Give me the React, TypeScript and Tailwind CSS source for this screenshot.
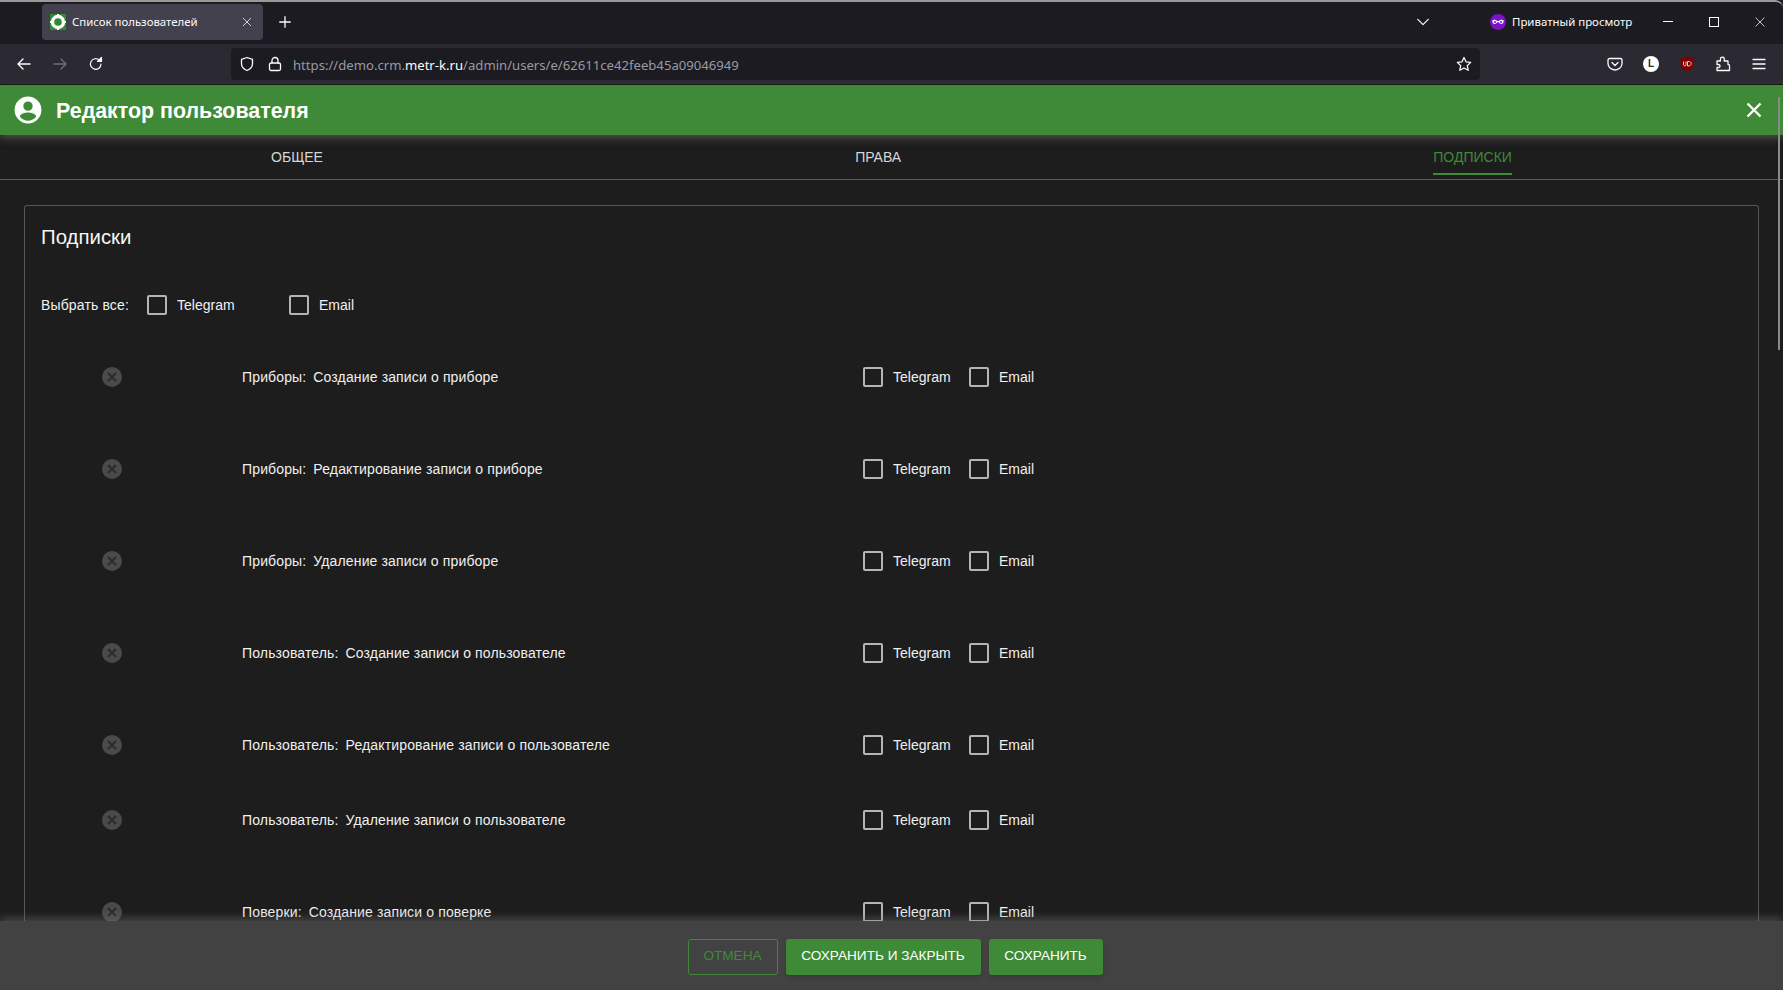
import React from "react";

const rows: [string, string, string][] = [
  ["Приборы:", "Создание записи о приборе", "h-[92px]"],
  ["Приборы:", "Редактирование записи о приборе", "h-[92px]"],
  ["Приборы:", "Удаление записи о приборе", "h-[92px]"],
  ["Пользователь:", "Создание записи о пользователе", "h-[92px]"],
  ["Пользователь:", "Редактирование записи о пользователе", "h-[75px]"],
  ["Пользователь:", "Удаление записи о пользователе", "h-[92px]"],
  ["Поверки:", "Создание записи о поверке", "h-[92px]"],
];

const Box = () => <span className="block w-5 h-5 shrink-0 rounded-[2px] border-2 border-[#b5b5b5]" />;

const Stroke = ({ size = 16, children, color = "#fbfbfe", sw = 1.4 }: { size?: number; children: React.ReactNode; color?: string; sw?: number }) => (
  <svg width={size} height={size} viewBox="0 0 16 16" fill="none" stroke={color} strokeWidth={sw} strokeLinecap="round" strokeLinejoin="round" className="shrink-0">
    {children}
  </svg>
);

const Slot = ({ w, children }: { w: string; children: React.ReactNode }) => (
  <div className={`${w} flex items-center justify-center shrink-0`}>{children}</div>
);

function TabStrip() {
  return (
    <div className="h-[44px] bg-[#1c1b22] border-t-2 border-[#9a9a9a] rounded-tr-[8px] flex items-center pl-[42px] font-['Noto_Sans',sans-serif] text-[#fbfbfe]">
      <div className="w-[221px] h-[36px] bg-[#42414d] rounded-[4px] flex items-center pl-2 pr-2 mt-[-2px]">
        <svg width="16" height="16" viewBox="0 0 16 16" className="shrink-0">
          <rect width="16" height="16" fill="#2f8a34" />
          <circle cx="8" cy="8" r="5.500" fill="none" stroke="#fff" strokeWidth="3.400" />
          <path d="M8 0v1.500M8 14.500V16M0 8h1.500M14.500 8H16" stroke="#fff" strokeWidth="2" />
        </svg>
        <span className="ml-[6px] text-[11.4px] leading-none whitespace-nowrap">Список пользователей</span>
        <span className="ml-auto mr-[2px]">
          <Stroke size={12} sw={1.3} color="#d4d4d8"><path d="M3 3l10 10M13 3L3 13" /></Stroke>
        </span>
      </div>
      <div className="ml-[15px] mt-[-2px]">
        <Stroke size={14} sw={1.5}><path d="M8 2v12M2 8h12" /></Stroke>
      </div>
      <div className="ml-auto flex items-center mt-[-3px]">
        <Stroke size={14} sw={1.4}><path d="M2 5l6 6 6-6" /></Stroke>
        <svg width="16" height="16" viewBox="0 0 16 16" className="ml-[60px] shrink-0">
          <circle cx="8" cy="8" r="8" fill="#7a12c9" />
          <path d="M2.500 6.300c1.300-1 3.500-.8 4.600.7h1.800c1.100-1.500 3.300-1.700 4.600-.7.500 1.700-.3 3.700-2 3.700-1.300 0-2-.7-2.700-1.700H7.200C6.500 9.300 5.800 10 4.500 10c-1.700 0-2.500-2-2-3.700z" fill="#fff" />
          <circle cx="5" cy="8" r="1.100" fill="#7a12c9" />
          <circle cx="11" cy="8" r="1.100" fill="#7a12c9" />
        </svg>
        <span className="ml-[6px] w-[121px] text-[11.45px] leading-none whitespace-nowrap">Приватный просмотр</span>
        <div className="flex items-center ml-[12px]">
          <Slot w="w-[46px]"><svg width="10" height="1" className="shrink-0"><rect width="10" height="1" fill="#fbfbfe" /></svg></Slot>
          <Slot w="w-[46px]"><span className="block w-[10px] h-[10px] border border-[#fbfbfe]" /></Slot>
          <Slot w="w-[46px]"><Stroke size={12} sw={1}><path d="M2.500 2.500l11 11M13.500 2.500l-11 11" /></Stroke></Slot>
        </div>
      </div>
    </div>
  );
}

function Toolbar() {
  return (
    <div className="h-[41px] bg-[#2b2a33] border-b border-[#0c0c0d] flex items-center font-['Noto_Sans',sans-serif]">
      <div className="flex items-center pl-[6px] w-[231px] shrink-0">
        <Slot w="w-9"><Stroke><path d="M14 8H2M7 3L2 8l5 5" /></Stroke></Slot>
        <Slot w="w-9"><Stroke color="#6f6e75"><path d="M2 8h12M9 3l5 5-5 5" /></Stroke></Slot>
        <Slot w="w-9">
          <Stroke sw={1.2}><path d="M13 8a5.300 5.300 0 1 1-1.700-3.900" /><path d="M13.500 1.500v4h-4z" fill="#fbfbfe" /></Stroke>
        </Slot>
      </div>
      <div className="w-[1249px] h-[32px] bg-[#1c1b22] rounded-[4px] flex items-center pl-[8px] pr-[8px] shrink-0">
        <Slot w="w-4">
          <Stroke size={16} sw={1.3}><path d="M8 1.500l5.500 1.800v4.200c0 3.500-2.700 5.900-5.500 7-2.800-1.100-5.500-3.500-5.500-7V3.300z" /></Stroke>
        </Slot>
        <span className="ml-3">
          <Stroke size={16} sw={1.3}><rect x="2.500" y="7" width="11" height="7.500" rx="1.500" /><path d="M5 7V4.500a3 3 0 0 1 6 0V7" /></Stroke>
        </span>
        <span className="ml-[10px] pt-[3px] text-[13.13px] leading-none text-[#9a9aa0] whitespace-nowrap">
          https://demo.crm.<span className="text-[#fbfbfe]">metr-k.ru</span>/admin/users/e/62611ce42feeb45a09046949
        </span>
        <span className="ml-auto">
          <Stroke size={16} sw={1.3}><path d="M8 1.500l2 4.300 4.700.6-3.400 3.200.9 4.700L8 12l-4.200 2.300.9-4.700L1.300 6.400 6 5.800z" /></Stroke>
        </span>
      </div>
      <div className="flex items-center pl-[117px]">
        <Slot w="w-9">
          <Stroke size={16} sw={1.3}><path d="M2.500 2.500h11a1.500 1.500 0 0 1 1.500 1.500v3.500a7 6.500 0 0 1-14 0V4a1.500 1.500 0 0 1 1.500-1.500z" /><path d="M5 6.500l3 3 3-3" /></Stroke>
        </Slot>
        <Slot w="w-9">
          <span className="w-4 h-4 rounded-full bg-white text-[#2b2a33] text-[10px] font-bold leading-none flex items-center justify-center font-['Liberation_Sans',sans-serif]">L</span>
        </Slot>
        <Slot w="w-9">
          <svg width="16" height="16" viewBox="0 0 16 16" className="shrink-0">
            <path d="M8 .5l6.500 2v5.500c0 3.500-3 6-6.500 7.500C4.500 14 1.500 11.500 1.500 8V2.500z" fill="#800000" />
            <path d="M4.500 5.500v3.200c0 1.500 2.500 1.500 2.500 0V5.500M8.500 5.500v4.500c2.800.2 3.800-1 3.800-2.300 0-1.300-1-2.400-3.800-2.200z" fill="none" stroke="#e8c8c8" strokeWidth="1" />
          </svg>
        </Slot>
        <Slot w="w-9">
          <Stroke size={16} sw={1.3}><path d="M2 5h3.500c-.5-3 .5-3.800 2-3.800s2.200 1 1.600 3.800H13v3.500c1-.3 1.500.3 1.500 1.800v4.200H2v-3h1.500c1 0 1.500-.6 1.500-1.500S4.500 8.500 3.500 8.500H2z" /></Stroke>
        </Slot>
        <Slot w="w-9">
          <Stroke size={16} sw={1.3}><path d="M2 3.500h12M2 8h12M2 12.500h12" /></Stroke>
        </Slot>
      </div>
    </div>
  );
}

export default function App() {
  return (
    <div className="relative w-[1783px] h-[990px] overflow-hidden flex flex-col bg-[#1d1d1d] font-['Liberation_Sans',Arial,sans-serif] text-[14px] text-[#f0f0f0]">
      <TabStrip />
      <Toolbar />

      <header className="relative z-10 h-[50px] shrink-0 bg-[#3e8a36] flex items-center pl-[14px] pr-[21px] shadow-[0_3px_8px_rgba(120,120,120,0.55)]">
        <svg width="28" height="28" viewBox="0 0 24 24" fill="#fff" className="shrink-0">
          <path d="M12 .500a11.500 11.500 0 1 0 0 23 11.500 11.500 0 0 0 0-23zm0 4.200a4 4 0 1 1 0 8 4 4 0 0 1 0-8zm0 16.500c-2.900 0-5.500-1.400-7-3.600.1-2.300 4.700-3.500 7-3.500s6.900 1.200 7 3.500c-1.500 2.200-4.100 3.600-7 3.600z" />
        </svg>
        <h1 className="ml-[14px] pt-[4px] text-[21.4px] font-bold text-white leading-none">Редактор пользователя</h1>
        <svg width="16" height="16" viewBox="0 0 16 16" className="ml-auto shrink-0" stroke="#fff" strokeWidth="2.400">
          <path d="M1.500 1.500l13 13M14.500 1.500l-13 13" />
        </svg>
      </header>

      <nav className="h-[45px] shrink-0 border-b border-[#5c5c5c] flex justify-around items-start uppercase text-[14px] px-[5px]">
        {["Общее", "Права", "Подписки"].map((t, i) => (
          <div key={t} className={`pt-[14px] pb-[8px] leading-4 border-b-2 ${i === 2 ? "text-[#3e8a36] border-[#3e8a36]" : "text-[#d6d6d6] border-transparent"}`}>
            {t}
          </div>
        ))}
      </nav>

      <main className="flex-1 min-h-0 overflow-hidden px-6 pt-[25px]">
        <section className="border border-[#565656] border-b-0 rounded-t-[3px] pl-4 h-[800px]">
          <h2 className="text-[20.4px] leading-[24px] text-[#f5f5f5] mt-[19px]">Подписки</h2>
          <div className="flex items-center h-5 mt-[46px]">
            <span className="w-[106px] shrink-0 tracking-[0.14px]">Выбрать все:</span>
            <Box />
            <span className="ml-[10px] w-[112px] shrink-0">Telegram</span>
            <Box />
            <span className="ml-[10px]">Email</span>
          </div>
          <div className="mt-[52px]">
            {rows.map(([a, b, h]) => (
              <div key={b} className={`grid grid-cols-[201px_621px_106px_1fr] items-start ${h}`}>
                <div className="pl-[61px]">
                  <svg width="20" height="20" viewBox="0 0 20 20">
                    <circle cx="10" cy="10" r="10" fill="#4a4a4a" />
                    <path d="M6 6l8 8M14 6l-8 8" stroke="#2a2a2a" strokeWidth="1.800" />
                  </svg>
                </div>
                <div className="leading-5 whitespace-nowrap tracking-[0.14px]"><span className="mr-[7px]">{a}</span>{b}</div>
                <div className="flex items-center h-5"><Box /><span className="ml-[10px]">Telegram</span></div>
                <div className="flex items-center h-5"><Box /><span className="ml-[10px]">Email</span></div>
              </div>
            ))}
          </div>
        </section>
      </main>

      <footer className="relative z-10 h-[69px] shrink-0 bg-[#424242] flex items-center justify-center gap-2 pl-[7px] pt-[2px] shadow-[0_-3px_8px_rgba(120,120,120,0.45)] text-[13.6px]">
        <button className="w-[90px] h-9 uppercase rounded-[3px] border border-[#3e8a36] text-[#3e8a36]">Отмена</button>
        <button className="w-[195px] h-9 uppercase rounded-[3px] bg-[#3e8a36] text-white shadow-md">Сохранить и закрыть</button>
        <button className="w-[114px] h-9 uppercase rounded-[3px] bg-[#3e8a36] text-white shadow-md">Сохранить</button>
      </footer>

      <div className="absolute right-[3px] top-[97px] w-[2px] h-[253px] bg-[#8a8a8a] z-20" />
    </div>
  );
}
